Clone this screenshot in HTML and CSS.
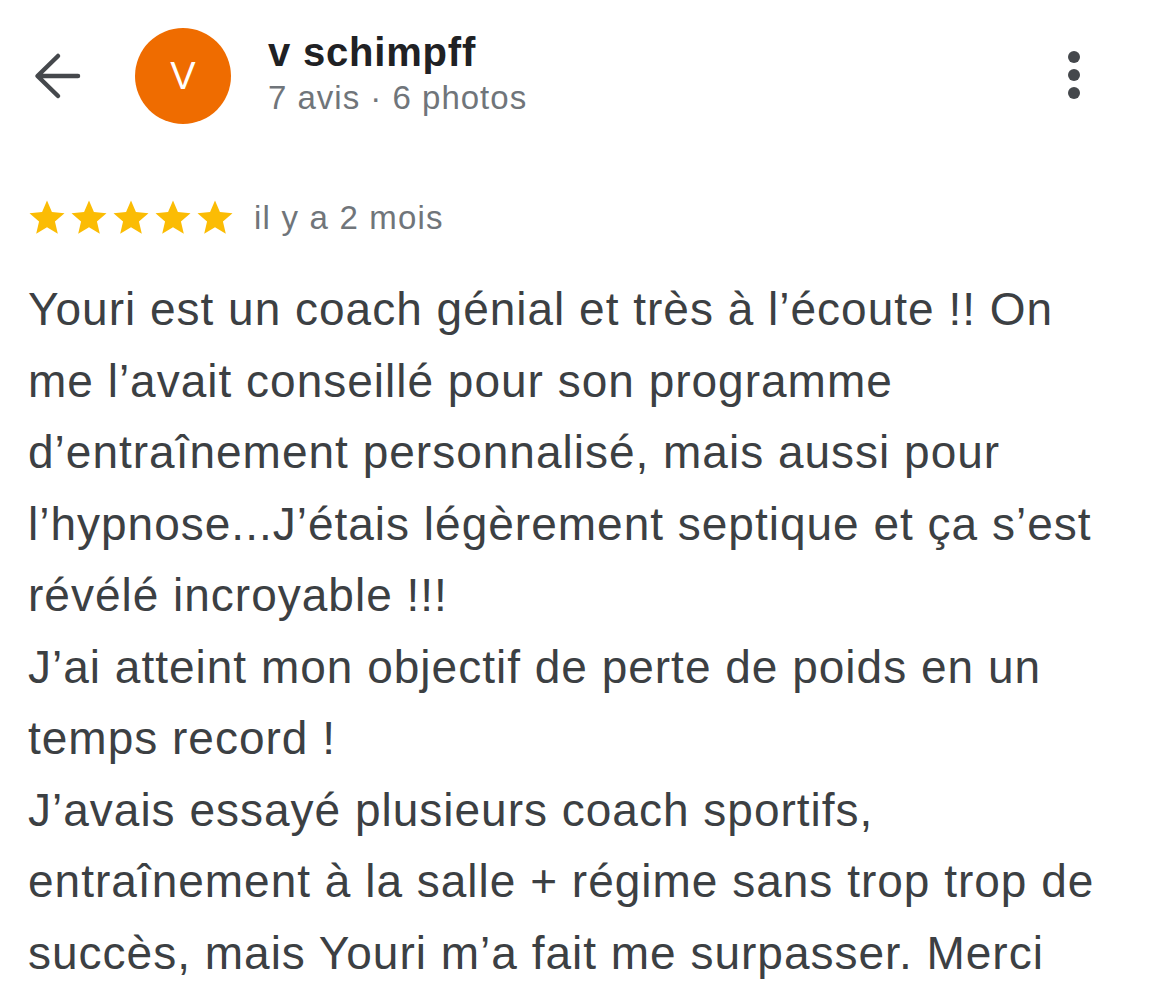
FILE: index.html
```html
<!DOCTYPE html>
<html lang="fr">
<head>
<meta charset="utf-8">
<title>Avis</title>
<link rel="stylesheet" href="styles.css">
</head>
<body>
<div class="page">
  <header class="top">
    <button class="back" aria-label="Retour">
      <svg width="48" height="48" viewBox="0 0 48 48"><path d="M45 24H5M25 4L4.5 24L25 44" fill="none" stroke="#45484c" stroke-width="4.5" stroke-linecap="round" stroke-linejoin="round"/></svg>
    </button>
    <div class="avatar">V</div>
    <div class="who">
      <div class="name">v schimpff</div>
      <div class="meta">7 avis · 6 photos</div>
    </div>
    <button class="more" aria-label="Plus">
      <span class="dot"></span><span class="dot"></span><span class="dot"></span>
    </button>
  </header>

  <div class="rating">
    <div class="stars">
      <svg class="star" viewBox="0 0 24 24"><path d="M12 17.27L18.18 21l-1.64-7.03L22 9.24l-7.19-.61L12 2 9.19 8.63 2 9.24l5.46 4.730L5.82 21z"/></svg>
      <svg class="star" viewBox="0 0 24 24"><path d="M12 17.27L18.18 21l-1.64-7.03L22 9.24l-7.19-.61L12 2 9.19 8.63 2 9.24l5.46 4.73L5.82 21z"/></svg>
      <svg class="star" viewBox="0 0 24 24"><path d="M12 17.27L18.18 21l-1.64-7.03L22 9.24l-7.19-.61L12 2 9.19 8.63 2 9.24l5.46 4.73L5.82 21z"/></svg>
      <svg class="star" viewBox="0 0 24 24"><path d="M12 17.27L18.18 21l-1.64-7.03L22 9.24l-7.19-.61L12 2 9.19 8.63 2 9.24l5.46 4.73L5.82 21z"/></svg>
      <svg class="star" viewBox="0 0 24 24"><path d="M12 17.27L18.18 21l-1.64-7.03L22 9.24l-7.19-.61L12 2 9.19 8.63 2 9.24l5.46 4.73L5.82 21z"/></svg>
    </div>
    <span class="when">il y a 2 mois</span>
  </div>

  <p class="review">Youri est un coach génial et très à l’écoute !! On<br>me l’avait conseillé pour son programme<br>d’entraînement personnalisé, mais aussi pour<br>l’hypnose...J’étais légèrement septique et ça s’est<br>révélé incroyable !!!<br>J’ai atteint mon objectif de perte de poids en un<br>temps record !<br>J’avais essayé plusieurs coach sportifs,<br>entraînement à la salle + régime sans trop trop de<br>succès, mais Youri m’a fait me surpasser. Merci</p>
</div>
</body>
</html>
```

FILE: styles.css
```css
html, body {
  margin: 0;
  padding: 0;
  background: #ffffff;
}
body {
  font-family: "Liberation Sans", Arial, Helvetica, sans-serif;
  color: #3c4043;
  overflow: hidden;
}
.page {
  width: 1158px;
  height: 999px;
  overflow: hidden;
}
.top {
  display: flex;
  align-items: center;
  height: 96px;
  padding: 28px 0 0 0;
}
.back {
  border: 0;
  background: none;
  padding: 0;
  margin-left: 33px;
  width: 48px;
  height: 48px;
  display: flex;
  align-items: center;
  justify-content: center;
}
.avatar {
  margin-left: 54px;
  width: 96px;
  height: 96px;
  border-radius: 50%;
  background: #ef6c00;
  color: #ffffff;
  font-size: 38px;
  display: flex;
  align-items: center;
  justify-content: center;
}
.who {
  margin-left: 37px;
  flex: 1;
  display: flex;
  flex-direction: column;
  margin-top: -2px;
}
.name {
  font-weight: bold;
  font-size: 40px;
  line-height: 46px;
  letter-spacing: 0.8px;
  color: #202124;
}
.meta {
  font-size: 33px;
  line-height: 46px;
  letter-spacing: 1px;
  color: #70757a;
}
.more {
  border: 0;
  background: none;
  padding: 0;
  width: 20px;
  margin-right: 74px;
  display: flex;
  flex-direction: column;
  align-items: center;
  gap: 6px;
  margin-top: -2px;
}
.dot {
  width: 12px;
  height: 12px;
  border-radius: 50%;
  background: #45484c;
}
.rating {
  display: flex;
  align-items: center;
  margin-top: 74px;
  padding-left: 26px;
  height: 40px;
}
.stars {
  display: flex;
}
.star {
  width: 42px;
  height: 42px;
  fill: #fbbc04;
}
.when {
  margin-left: 18px;
  font-size: 33px;
  letter-spacing: 1.2px;
  color: #70757a;
}
.review {
  margin: 36px 0 0 0;
  padding-left: 28px;
  font-size: 46px;
  line-height: 71.5px;
  letter-spacing: 1px;
  color: #3c4043;
  white-space: nowrap;
}
```
